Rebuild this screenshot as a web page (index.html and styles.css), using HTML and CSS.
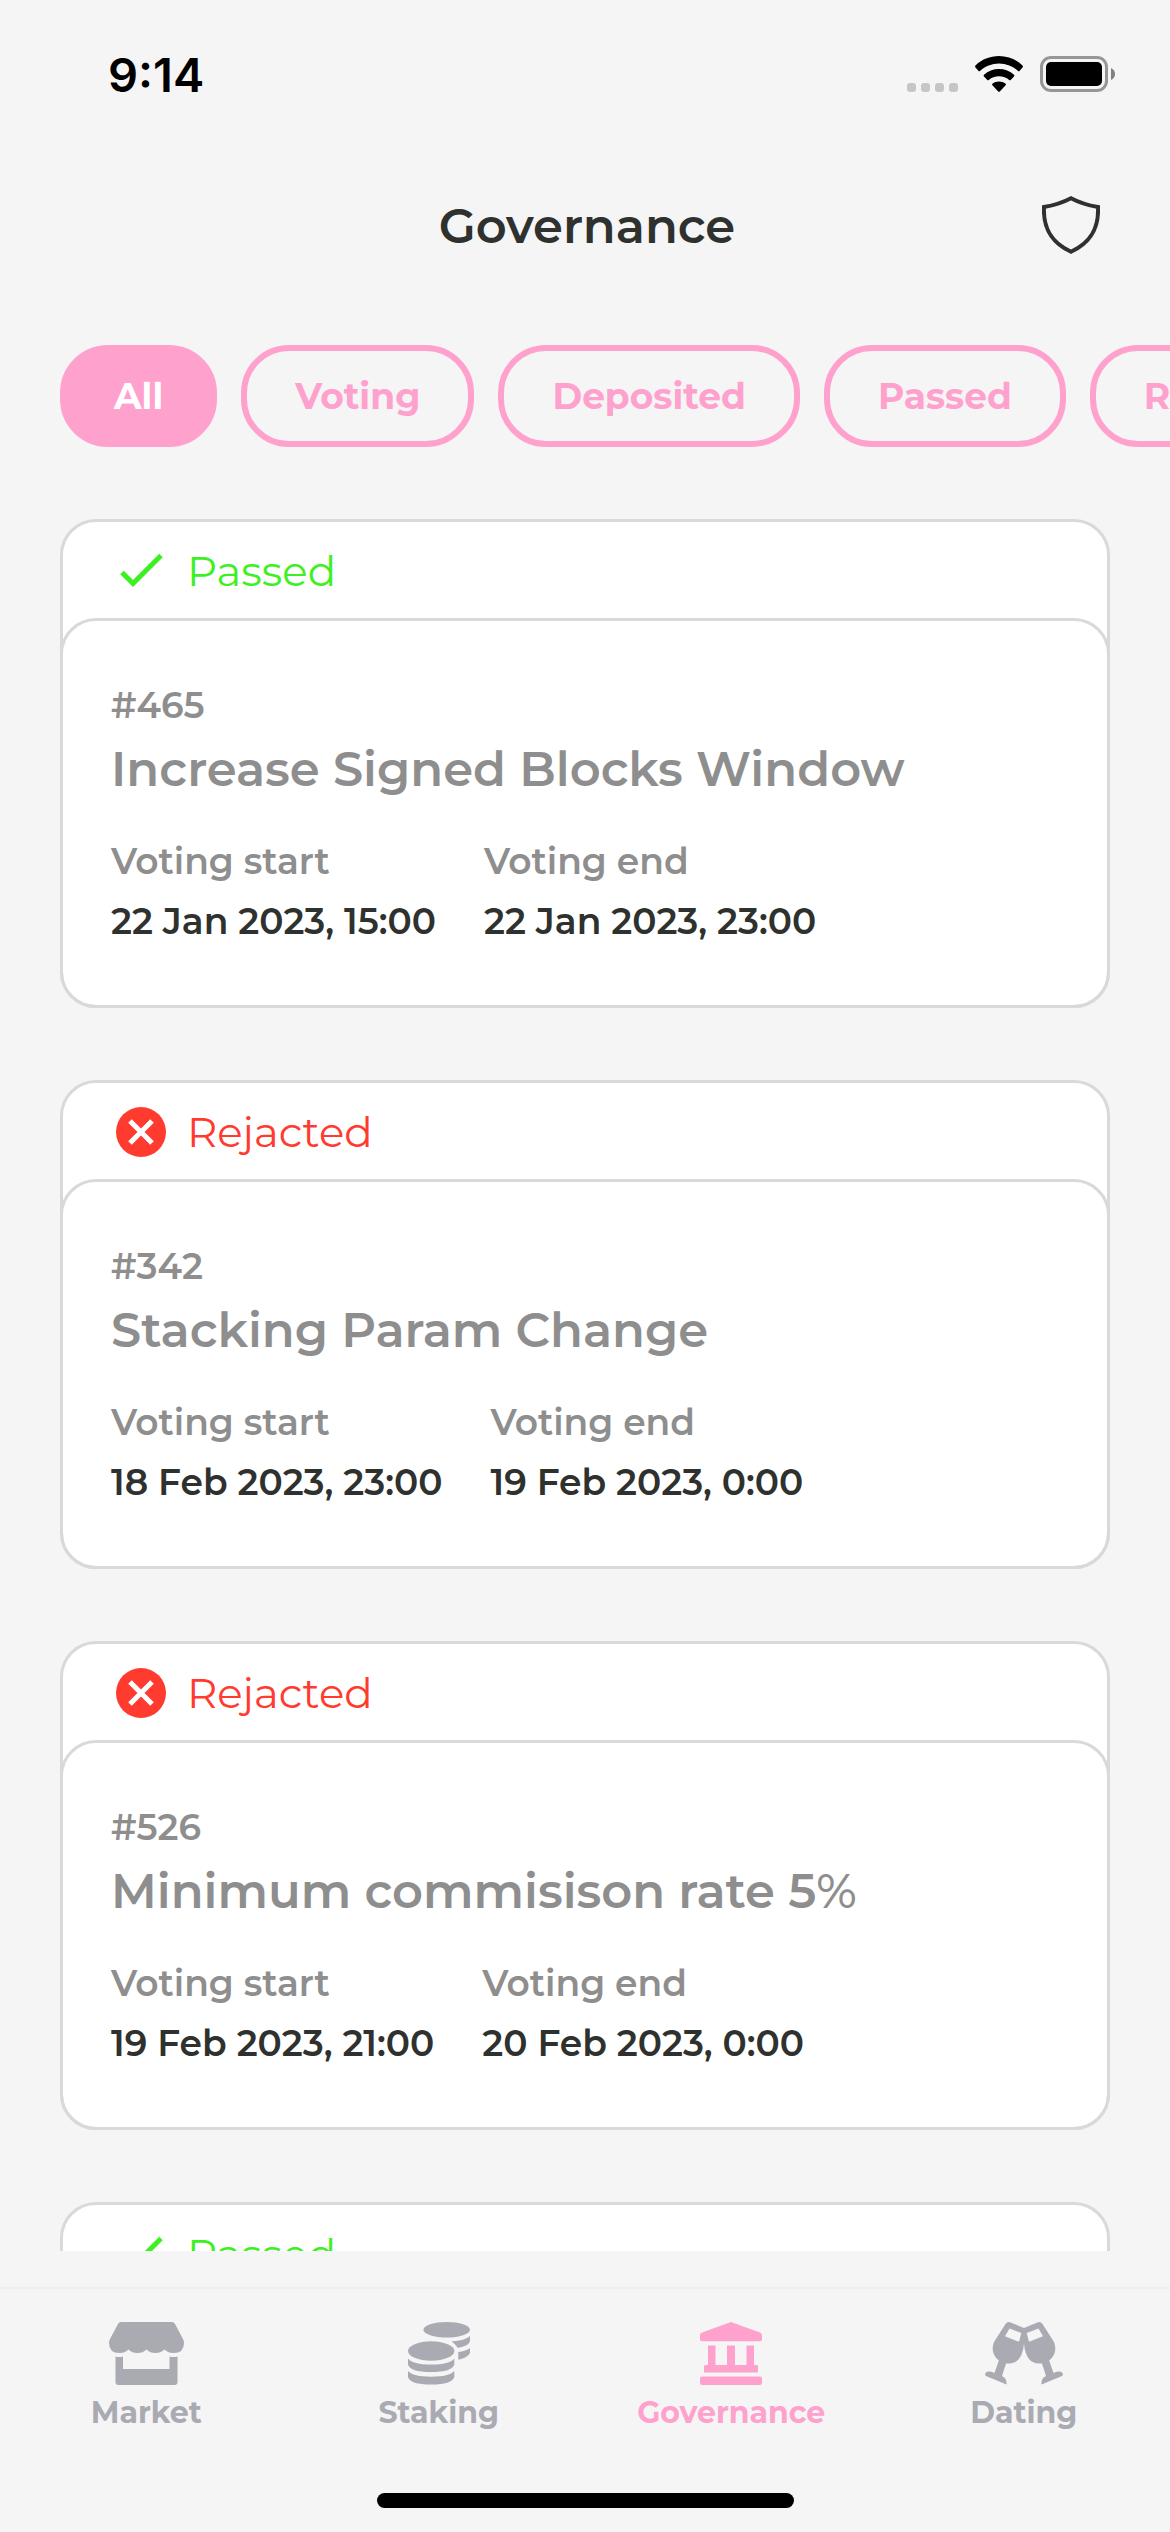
FILE: index.html
```html
<!DOCTYPE html>
<html lang="en">
<head>
<meta charset="utf-8">
<meta name="viewport" content="width=device-width, initial-scale=1">
<title>Governance</title>
<link rel="stylesheet" href="styles.css">
</head>
<body>
<svg class="sprite" aria-hidden="true">
  <symbol id="icon-check" viewBox="0 0 60 60">
    <path d="M11 31.500L22 42.500L50 14.500" fill="none" stroke="currentColor" stroke-width="5"/>
  </symbol>
  <symbol id="icon-cross" viewBox="0 0 60 60">
    <circle cx="30" cy="30" r="25" fill="currentColor"/>
    <path d="M19 19L41 41M41 19L19 41" fill="none" stroke="#fff" stroke-width="5"/>
  </symbol>
</svg>
<div class="screen">
  <div class="status-bar">
    <time class="clock">9:14</time>
    <div class="indicators">
      <svg class="signal" width="51" height="9" viewBox="0 0 51 9" aria-hidden="true"><rect width="9" height="9" rx="3"/><rect x="14" width="9" height="9" rx="3"/><rect x="28" width="9" height="9" rx="3"/><rect x="42" width="9" height="9" rx="3"/></svg>
      <svg width="48" height="36" viewBox="0 0 48 36" aria-hidden="true"><path d="M24 0C15 0 6.500 3.500 .5 9.500Q-.4 10.500 .5 11.500L3.500 15Q4.200 15.700 5 15C10 10.300 17 7.500 24 7.500S38 10.300 43 15Q43.800 15.700 44.500 15L47.500 11.500Q48.400 10.500 47.500 9.500C41.500 3.500 33 0 24 0ZM24 13C18.300 13 13 15 9 18.700Q8.200 19.600 9 20.500L12.300 24Q13 24.700 13.800 24C16.600 21.600 20.200 20.300 24 20.300S31.400 21.600 34.200 24Q35 24.700 35.700 24L39 20.500Q39.800 19.600 39 18.700C35 15 29.700 13 24 13ZM24 25.500C21.500 25.500 19.200 26.300 17.400 27.700Q16.700 28.500 17.400 29.300L23.200 35.400Q24 36.200 24.800 35.400L30.600 29.300Q31.300 28.500 30.600 27.700C28.800 26.300 26.500 25.500 24 25.500Z"/></svg>
      <svg width="75" height="36" viewBox="0 0 75 36" aria-hidden="true"><rect x="1.500" y="1.500" width="65" height="33" rx="9.500" fill="none" stroke="#969696" stroke-width="3"/><rect x="6" y="6" width="56" height="24" rx="5"/><path d="M71 12Q75 14 75 18T71 24Z" fill="#808080"/></svg>
    </div>
  </div>

  <header class="header">
    <h1 class="title">Governance</h1>
    <button class="shield" type="button" aria-label="Security">
      <svg width="58" height="58" viewBox="0 0 58 58" aria-hidden="true"><path d="M29 2.200Q17 8.500 2 11C1 32 9 46.500 29 55.800C49 46.500 57 32 56 11Q41 8.500 29 2.200Z" fill="none" stroke="currentColor" stroke-width="4"/></svg>
    </button>
  </header>

  <div class="filters">
    <button class="pill pill-active" type="button">All</button>
    <button class="pill" type="button">Voting</button>
    <button class="pill" type="button">Deposited</button>
    <button class="pill" type="button">Passed</button>
    <button class="pill" type="button">Rejected</button>
  </div>

  <main class="list">
    <article class="card passed">
      <div class="status"><svg class="status-icon" aria-hidden="true"><use href="#icon-check"/></svg>Passed</div>
      <div class="proposal">
        <p class="number">#465</p>
        <h2 class="name">Increase Signed Blocks Window</h2>
        <dl class="dates">
          <div><dt>Voting start</dt><dd>22 Jan 2023, 15:00</dd></div>
          <div><dt>Voting end</dt><dd>22 Jan 2023, 23:00</dd></div>
        </dl>
      </div>
    </article>
    <article class="card rejected">
      <div class="status"><svg class="status-icon" aria-hidden="true"><use href="#icon-cross"/></svg>Rejacted</div>
      <div class="proposal">
        <p class="number">#342</p>
        <h2 class="name">Stacking Param Change</h2>
        <dl class="dates">
          <div><dt>Voting start</dt><dd>18 Feb 2023, 23:00</dd></div>
          <div><dt>Voting end</dt><dd>19 Feb 2023, 0:00</dd></div>
        </dl>
      </div>
    </article>
    <article class="card rejected">
      <div class="status"><svg class="status-icon" aria-hidden="true"><use href="#icon-cross"/></svg>Rejacted</div>
      <div class="proposal">
        <p class="number">#526</p>
        <h2 class="name">Minimum commisison rate 5<span class="percent">%</span></h2>
        <dl class="dates">
          <div><dt>Voting start</dt><dd>19 Feb 2023, 21:00</dd></div>
          <div><dt>Voting end</dt><dd>20 Feb 2023, 0:00</dd></div>
        </dl>
      </div>
    </article>
    <article class="card passed">
      <div class="status"><svg class="status-icon" aria-hidden="true"><use href="#icon-check"/></svg>Passed</div>
    </article>
  </main>

  <nav class="tabs">
    <a class="tab" href="#market">
      <svg width="75" height="63" viewBox="0 0 75 63" aria-hidden="true"><path d="M12 0H63Q65 0 66 2L73.500 16Q75 18.500 75 21Q75 31 64.500 31Q59 31 55.500 27.500Q52 31 46.300 31Q41 31 37.500 27.500Q34 31 28.300 31Q23 31 19.500 27.500Q16 31 10.500 31Q0 31 0 21Q0 18.500 1.500 16L9 2Q10 0 12 0ZM6.500 34.500Q10 35.500 14 34.500V47H60.500V34.500Q64 35.500 68.500 34.500V60Q68.500 63 65.500 63H9.500Q6.500 63 6.500 60Z"/></svg>
      Market
    </a>
    <a class="tab" href="#staking">
      <svg width="62" height="63" viewBox="0 0 62 63" aria-hidden="true"><ellipse cx="38.700" cy="7.800" rx="23.300" ry="7.800"/><ellipse cx="23.200" cy="29" rx="23.200" ry="9.700"/><path d="M43.500 19.500Q57 18.500 62 14V19.500Q60 24 50 26Q47.500 22 43.500 19.500ZM50.300 30Q58 29 62 26V31Q60 35.500 50.300 37.800Z"/><path d="M0 36.500Q5 42.500 23.200 42.500Q41.400 42.500 46.300 36.500V42.500Q44 50 23.200 50Q2 50 0 42.500ZM0 49Q5 54.700 23.200 54.700Q41.400 54.700 46.300 49V55Q44 62.500 23.200 62.500Q2 62.500 0 55Z"/></svg>
      Staking
    </a>
    <a class="tab tab-active" href="#governance" aria-current="page">
      <svg width="62" height="63" viewBox="0 0 62 63" aria-hidden="true"><path d="M31 0L60 10.500Q62 11.300 62 13V17.300Q62 19.300 60 19.300H2Q0 19.300 0 17.300V13Q0 11.300 2 10.500ZM8 23.500H15.500V43H27V23.500H35V43H46.500V23.500H54V43H56.500Q58 43 58 44.500V50.500H4V44.500Q4 43 5.500 43H8ZM2 54.500H60Q62 54.500 62 56.500V61Q62 63 60 63H2Q0 63 0 61V56.500Q0 54.500 2 54.500Z"/></svg>
      Governance
    </a>
    <a class="tab" href="#dating">
      <svg width="78" height="63" viewBox="0 0 78 63" aria-hidden="true"><g id="glass"><path fill-rule="evenodd" d="M25 .3L39 6V22Q37 41.500 24 41.500H21L17 54Q22 56 21.500 62.500L1 54Q-1 52.500 1 50.500Q3.500 48.500 9.500 51L13.800 38.500Q7.700 33.500 7.700 27Q7.700 23.500 9 20L20.500 2Q22.500 -.7 25 .3ZM24.500 6.500L20 14.300L34 19.800L36.300 11Z"/></g><use href="#glass" transform="matrix(-1 0 0 1 78 0)"/></svg>
      Dating
    </a>
  </nav>
  <div class="home-indicator"></div>
</div>
</body>
</html>
```

FILE: styles.css
```css
* {
  box-sizing: border-box;
}

body,
h1,
h2,
p,
dl,
dd {
  margin: 0;
}

body {
  background: #f5f5f5;
  color: #2f312f;
  font-family: Montserrat, Inter, "Open Sans", sans-serif;
}

button {
  font: inherit;
  color: inherit;
  cursor: pointer;
}

.sprite {
  position: absolute;
  width: 0;
  height: 0;
}

.screen {
  display: flex;
  flex-direction: column;
  height: 100vh;
  overflow: hidden;
}

.status-bar {
  display: flex;
  flex: none;
  justify-content: space-between;
  align-items: center;
  height: 148px;
  padding: 0 55px 0 108px;
  color: #000;
}

.clock {
  font-family: Inter, sans-serif;
  font-size: 47px;
  font-weight: 600;
}

.indicators {
  display: flex;
  align-items: flex-end;
  gap: 17px;
}

.signal {
  fill: #c6c6c6;
}

.header {
  display: grid;
  flex: none;
  grid-template-columns: 1fr auto 1fr;
  align-items: center;
  height: 155px;
  padding: 0 70px 0 74px;
}

.title {
  grid-column: 2;
  font-size: 48px;
  font-weight: 600;
}

.shield {
  justify-self: end;
  height: 60px;
  padding: 0 0 2px;
  border: 0;
  background: none;
}

.shield svg {
  display: block;
}

.filters {
  display: flex;
  flex: none;
  gap: 24px;
  padding: 42px 60px 72px;
  overflow: hidden;
}

.pill {
  flex: none;
  height: 102px;
  padding: 0 48px;
  border: 6px solid #ffa1cd;
  border-radius: 48px;
  background: none;
  color: #ffa1cd;
  font-size: 36px;
  font-weight: 700;
}

.pill-active {
  background: #ffa1cd;
  color: #fff;
}

.list {
  display: flex;
  flex: 1;
  flex-direction: column;
  gap: 72px;
  min-height: 0;
  margin-bottom: 36px;
  padding: 0 60px;
  overflow: hidden;
}

.card {
  flex: none;
  border: 3px solid #d9d9d9;
  border-radius: 36px;
  background: #fff;
}

.status {
  display: flex;
  align-items: center;
  gap: 16px;
  height: 96px;
  padding: 2px 48px 0;
  font-size: 42px;
  font-weight: 400;
}

.status-icon {
  width: 60px;
  height: 60px;
}

.passed .status {
  color: #3df022;
}

.rejected .status {
  color: #ff3b30;
}

.proposal {
  height: 390px;
  margin: 0 -3px -3px;
  padding: 60px 48px;
  border: 3px solid #d9d9d9;
  border-radius: 36px;
  color: #8e8e8e;
  font-size: 36px;
  font-weight: 600;
  line-height: 48px;
}

.name {
  margin-bottom: 28px;
  font-size: 48px;
  font-weight: 600;
  line-height: 80px;
}

.percent {
  font-weight: 500;
}

.dates {
  display: flex;
  gap: 48px;
}

.dates dt {
  margin-bottom: 12px;
}

.dates dd {
  color: #2f312f;
}

.tabs {
  display: grid;
  flex: none;
  grid-template-columns: repeat(4, 1fr);
  height: 206px;
  padding-top: 33px;
  border-top: 2px solid #eee;
}

.tab {
  display: flex;
  flex-direction: column;
  align-items: center;
  gap: 10px;
  color: #aaaab2;
  font-size: 30px;
  font-weight: 700;
  line-height: 36px;
  text-decoration: none;
}

.tab svg {
  fill: currentColor;
}

.tab-active {
  color: #ffa1cd;
}

.home-indicator {
  flex: none;
  align-self: center;
  width: 417px;
  height: 15px;
  margin-bottom: 24px;
  border-radius: 8px;
  background: #000;
}
```
